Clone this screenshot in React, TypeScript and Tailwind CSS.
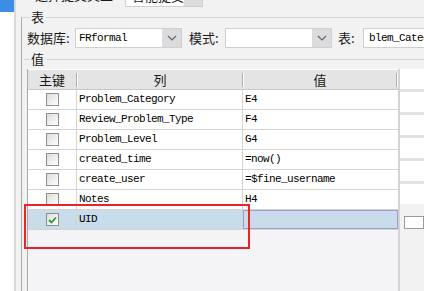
const mono = "font-['Liberation_Mono',monospace] text-[11px] tracking-[-0.6px] text-black whitespace-nowrap";
const cjk = "font-['Noto_Sans_CJK_SC',sans-serif] text-[13px] text-[#1a1a1a] whitespace-nowrap";

const rows = [
  { col: "Problem_Category", val: "E4" },
  { col: "Review_Problem_Type", val: "F4" },
  { col: "Problem_Level", val: "G4" },
  { col: "created_time", val: "=now()" },
  { col: "create_user", val: "=$fine_username" },
  { col: "Notes", val: "H4" },
  { col: "UID", val: "", checked: true },
];

function Chevron() {
  return (
    <svg width="10" height="6" viewBox="0 0 10 6">
      <path d="M1 1 L5 5 L9 1" fill="none" stroke="#666" strokeWidth="1.2" />
    </svg>
  );
}

function Combo({ text, width }: { text: string; width: string }) {
  return (
    <div className={`flex-none flex h-[20px] ${width} border border-[#cfcfcf] bg-white`}>
      <div className={`flex-1 flex items-center pl-[3px] ${mono}`}>{text}</div>
      <div className="w-[19px] bg-[#dcdcdf] flex items-center justify-center">
        <Chevron />
      </div>
    </div>
  );
}

function Check({ checked }: { checked?: boolean }) {
  return (
    <div className="w-[13px] h-[13px] border border-[#8e8e8e] bg-gradient-to-br from-[#dcdcdc] to-white flex items-center justify-center">
      {checked && (
        <svg width="9" height="8" viewBox="0 0 9 8">
          <path d="M1 4 L3.5 6.5 L8 1.5" fill="none" stroke="#2e9a30" strokeWidth="1.8" />
        </svg>
      )}
    </div>
  );
}

function HeadSep() {
  return (
    <div className="flex h-[14px]">
      <div className="w-px bg-[#b0b0b0]" />
      <div className="w-px bg-white" />
    </div>
  );
}

export default function App() {
  return (
    <div className="relative w-[424px] h-[291px] overflow-hidden flex bg-[#f2f2f3]">
      <div className="w-[14px] bg-white flex flex-col">
        <div className="h-[12px] bg-[#3b8de6]" />
      </div>
      <div className="w-[2px] bg-[#d9d9d9]" />
      <div className="w-[5px]" />

      <div className="flex-1 flex flex-col min-w-0">
        {/* cut-off top row */}
        <div className="h-[10px] flex items-start">
          <div className={`flex-none ml-[14px] -mt-[15px] h-[20px] leading-[20px] w-[90px] ${cjk}`}>选择提交类型</div>
          <div className="flex-none -mt-[14px] h-[21px] w-[78px] flex border border-[#cfcfcf] bg-white">
            <div className={`flex-1 pl-[6px] leading-[20px] -mt-[1px] ${cjk}`}>智能提交</div>
            <div className="w-[20px] bg-[#dcdcdf]" />
          </div>
        </div>

        {/* legend 表 */}
        <div className="h-[14px] flex items-center">
          <div className="self-end h-[7px] w-[9px] border-t border-l border-t-[#d6d6d6] border-l-[#a9a9a9]" />
          <div className={`px-[1px] leading-[14px] ${cjk}`}>表</div>
          <div className="flex-1 h-px bg-[#d6d6d6] ml-[1px]" />
        </div>

        <div className="flex-1 flex flex-col border-l border-[#a9a9a9] min-h-0">
          {/* form row */}
          <div className="mt-[4px] h-[20px] flex items-center pl-[5px] overflow-hidden">
            <div className={`flex-none w-[48px] ${cjk}`}>数据库:</div>
            <Combo text="FRformal" width="w-[107px]" />
            <div className={`flex-none ml-[7px] w-[36px] ${cjk}`}>模式:</div>
            <Combo text="" width="w-[107px]" />
            <div className={`flex-none ml-[6px] w-[25px] ${cjk}`}>表:</div>
            <div className={`flex-none w-[120px] h-[20px] border border-[#cfcfcf] bg-white flex items-center pl-[5px] ${mono}`}>
              blem_Category
            </div>
          </div>

          {/* legend 值 */}
          <div className="mt-[4px] h-[14px] flex items-center">
            <div className="ml-[2px] w-[6px] h-px bg-[#d6d6d6]" />
            <div className={`px-[1px] leading-[14px] ${cjk}`}>值</div>
            <div className="flex-1 h-px bg-[#d6d6d6] ml-[1px]" />
          </div>

          {/* table area */}
          <div className="mt-[3px] flex-1 flex pl-[5px] min-h-0">
            <div className="w-[380px] flex flex-col border-l border-[#a9a9a9] bg-[#f4f4f6]">
              <div className={`h-[21px] flex bg-[#e4e4e4] border-t border-white border-b border-b-[#c8c8c8] ${cjk}`}>
                <div className="w-[48px] flex items-center justify-center">主键</div>
                <div className="flex items-center"><HeadSep /></div>
                <div className="w-[164px] flex items-center justify-center">列</div>
                <div className="flex items-center"><HeadSep /></div>
                <div className="flex-1 flex items-center justify-center">值</div>
                <div className="flex items-center"><HeadSep /></div>
              </div>
              {rows.map((r) => (
                <div
                  key={r.col}
                  className={`h-[20px] flex border-b border-[#d4d4d4] ${r.checked ? "bg-[#c9dcea]" : "bg-white"}`}
                >
                  <div className="w-[49px] border-r border-[#d4d4d4] flex items-center justify-center">
                    <Check checked={r.checked} />
                  </div>
                  <div className={`w-[166px] border-r border-[#d4d4d4] flex items-center pl-[2px] ${mono}`}>{r.col}</div>
                  {r.checked ? (
                    <div className="flex-1 border border-[#9c9cd4] bg-[#c9dcea]" />
                  ) : (
                    <div className={`flex-1 flex items-center pl-[2px] ${mono}`}>{r.val}</div>
                  )}
                </div>
              ))}
            </div>
            <div className="w-[2px] bg-[#d4d4d4]" />
            <div className="flex-1 flex flex-col">
              {[0, 1, 2, 3, 4, 5].map((i) => (
                <div key={i} className="flex flex-col">
                  <div className="h-[20px] bg-white" />
                  {i < 5 && <div className="h-[3px] bg-[#e2e2e2]" />}
                </div>
              ))}
              <div className="h-[3px]" />
              <div className="mt-[9px] ml-[4px] h-[13px] w-[20px] border border-[#9a9a9a] bg-white" />
            </div>
          </div>
        </div>
      </div>

      {/* annotation box */}
      <div className="absolute left-[24px] top-[204px] w-[226px] h-[45px] border-2 border-[#e8232b]" />
    </div>
  );
}
